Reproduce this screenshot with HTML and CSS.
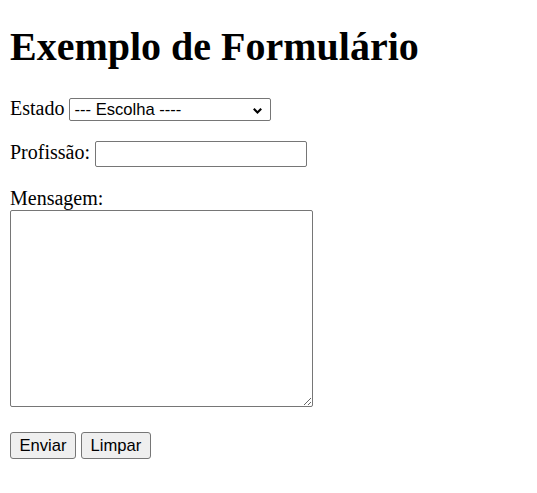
FILE: index.html
```html
<!DOCTYPE html>
<html lang="pt">
<head>
<meta charset="utf-8">
<title>Exemplo de Formulário</title>
<link rel="stylesheet" href="styles.css">
</head>
<body class="page">
<h1 class="title">Exemplo de Formulário</h1>
<form class="form">
<p class="row"><label for="estado">Estado</label> <span class="select-wrap"><select id="estado" class="ctl select"><option>--- Escolha ----</option></select><svg class="chevron" width="9" height="6" viewBox="0 0 9 6" aria-hidden="true"><path d="M0.8 0.8 L4.5 4.5 L8.2 0.8" fill="none" stroke="#000" stroke-width="2.1"/></svg></span></p>
<p class="row"><label for="prof">Profissão:</label> <input id="prof" class="ctl input" type="text"></p>
<p class="row"><label for="msg">Mensagem:</label><br><textarea id="msg" class="ctl textarea"></textarea></p>
<p class="row"><button type="submit" class="ctl btn">Enviar</button> <button type="reset" class="ctl btn">Limpar</button></p>
</form>
</body>
</html>
```
FILE: styles.css
```css
.page {
  margin: 10px;
  font-family: "Liberation Serif", "Times New Roman", serif;
  font-size: 20px;
  color: #000;
  background: #fff;
}
.title {
  font-size: 40px;
  font-weight: bold;
  margin: 13px 0 27px;
}
.form { margin: 0; }
.row { margin: 20px 0; }
.ctl {
  font-family: "Liberation Sans", Arial, sans-serif;
  font-size: 16.6px;
  color: #000;
}
.select-wrap {
  position: relative;
  display: inline-block;
}
.select {
  -webkit-appearance: none;
  appearance: none;
  box-sizing: border-box;
  width: 202px;
  height: 23px;
  border: 1px solid #767676;
  border-radius: 2px;
  background: #fff;
  padding: 0 20px 0 4px;
  margin: 0;
  vertical-align: baseline;
}
.chevron {
  position: absolute;
  right: 9px;
  top: 11px;
  pointer-events: none;
}
.input {
  box-sizing: border-box;
  width: 212px;
  height: 26px;
  padding: 1px 3px;
  border: 1px solid #767676;
  border-radius: 2px;
}
.textarea {
  box-sizing: border-box;
  width: 303px;
  height: 197px;
  padding: 2px;
  border: 1px solid #767676;
  border-radius: 2px;
}
.btn {
  box-sizing: border-box;
  height: 27px;
  padding: 1px 8.5px;
  border: 1px solid #767676;
  border-radius: 3px;
  background: #efefef;
}
```
